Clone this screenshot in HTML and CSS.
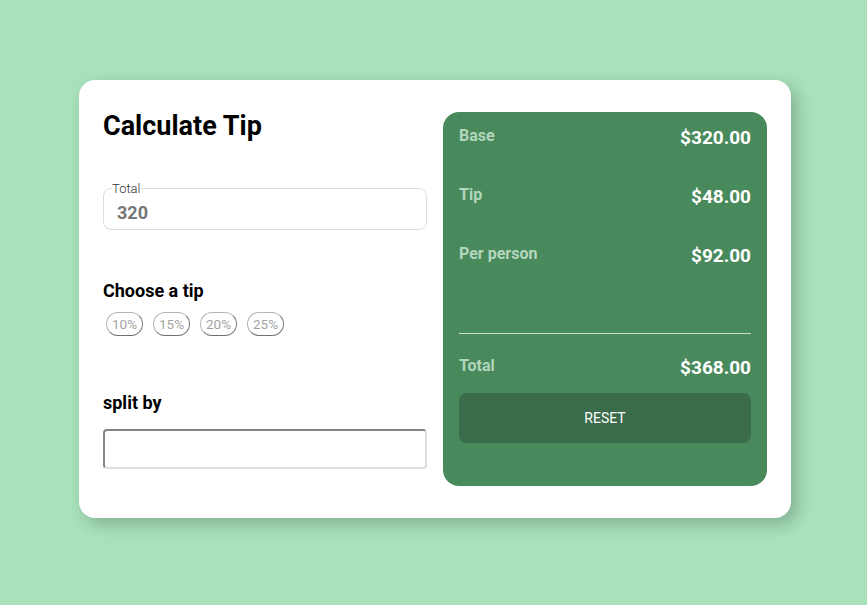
FILE: index.html
```html
<!DOCTYPE html>
<html lang="en">
<head>
<meta charset="utf-8">
<title>Calculate Tip</title>
<link rel="stylesheet" href="styles.css">
</head>
<body>
<main class="card">
  <section class="form">
    <h1 class="title">Calculate Tip</h1>
    <fieldset class="total-field">
      <legend class="total-legend">Total</legend>
      <input class="total-input" type="text" value="320">
    </fieldset>
    <h2 class="label">Choose a tip</h2>
    <div class="tips">
      <button class="tip">10%</button>
      <button class="tip">15%</button>
      <button class="tip">20%</button>
      <button class="tip">25%</button>
    </div>
    <h2 class="label split-label">split by</h2>
    <input class="split-input" type="text">
  </section>
  <section class="summary">
    <div class="row"><span class="row-label">Base</span><span class="row-value">$320.00</span></div>
    <div class="row"><span class="row-label">Tip</span><span class="row-value">$48.00</span></div>
    <div class="row"><span class="row-label">Per person</span><span class="row-value">$92.00</span></div>
    <hr class="divider">
    <div class="row total-row"><span class="row-label">Total</span><span class="row-value">$368.00</span></div>
    <button class="reset">RESET</button>
  </section>
</main>
</body>
</html>
```
FILE: styles.css
```css
* { box-sizing: border-box; }
html, body { margin: 0; padding: 0; }
body {
  background: #a8e1bb;
  font-family: Roboto, "Liberation Sans", Arial, sans-serif;
  min-height: 605px;
  padding: 80px 0 0 79px;
}
.card {
  width: 712px;
  background: #fff;
  border-radius: 16px;
  padding: 32px 24px;
  display: grid;
  grid-template-columns: 324px 324px;
  column-gap: 16px;
  box-shadow: 6px 6px 16px rgba(0, 0, 0, 0.22);
}
.form { display: flex; flex-direction: column; align-items: flex-start; }
.title {
  margin: 0;
  font-size: 27px;
  line-height: 28px;
  font-weight: 700;
  color: #000;
}
.total-field {
  margin: 41px 0 0;
  width: 324px;
  border: 1px solid #dcdcdc;
  border-radius: 8px;
  padding: 0 8px 3px;
}
.total-legend {
  padding: 0;
  font-size: 13px;
  font-weight: 300;
  color: #333;
  line-height: 15px;
}
.total-input {
  display: block;
  width: 100%;
  border: none;
  outline: none;
  padding: 0 5px;
  height: 28px;
  margin-top: 2px;
  font-family: inherit;
  font-size: 18px;
  font-weight: 700;
  color: #777;
  background: transparent;
}
.label {
  margin: 50px 0 0;
  font-size: 18px;
  font-weight: 700;
  color: #000;
}
.tips {
  display: flex;
  gap: 10px;
  margin-top: 11px;
  padding-left: 3px;
}
.tip {
  width: 37px;
  height: 24px;
  padding: 0;
  border: 1px solid #b5b5b5;
  border-right-color: #7a7a7a;
  border-bottom-color: #6f6f6f;
  border-radius: 12px;
  background: #fff;
  color: #a3a3a3;
  font-family: inherit;
  font-size: 13.5px;
}
.split-label { margin-top: 56px; }
.split-input {
  margin-top: 16px;
  width: 324px;
  height: 40px;
  border: 2px solid #dedede;
  border-top-color: #858585;
  border-left-color: #858585;
  border-radius: 4px;
  background: #fff;
}
.summary {
  background: #488a5c;
  border-radius: 16px;
  height: 374px;
  padding: 14px 16px 0;
  display: flex;
  flex-direction: column;
}
.row {
  display: flex;
  justify-content: space-between;
  align-items: flex-start;
  height: 23px;
  margin-bottom: 36px;
}
.row-label {
  font-size: 16px;
  font-weight: 700;
  color: #b3d6bc;
  line-height: 18px;
  margin-top: 1px;
}
.row-value {
  font-size: 19px;
  font-weight: 700;
  color: #fff;
  line-height: 23px;
}
.divider {
  margin: 30px 0 0;
  border: none;
  height: 1px;
  background: #c9dccd;
}
.total-row { margin-top: 22px; margin-bottom: 0; }
.reset {
  margin-top: 14px;
  height: 50px;
  border: none;
  border-radius: 8px;
  background: #3a6c4b;
  color: #fff;
  font-family: inherit;
  font-size: 14px;
}
```
